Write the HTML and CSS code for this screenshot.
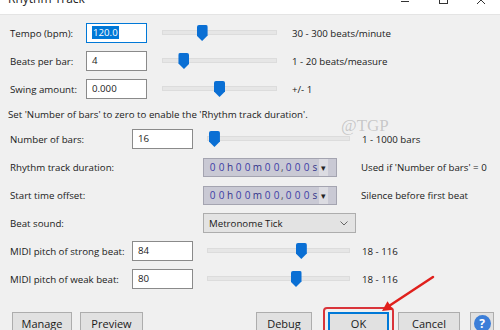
FILE: index.html
```html
<!DOCTYPE html>
<html lang="en">
<head>
<meta charset="UTF-8" />
<title>Rhythm Track</title>
<link rel="stylesheet" href="styles.css">
</head>
<body>

<div class="window">
  <div class="titlebar">
    <span class="title">Rhythm Track</span>
    <div class="winbtns">
      <span class="winbtn">
        <svg width="38" height="14" viewBox="0 0 38 14"><line x1="15" y1="1.5" x2="23" y2="1.5" stroke="#333" stroke-width="1"/></svg>
      </span>
      <span class="winbtn">
        <svg width="38" height="14" viewBox="0 0 38 14"><rect x="15.5" y="-4.5" width="8" height="8" fill="none" stroke="#333" stroke-width="1"/></svg>
      </span>
      <span class="winbtn">
        <svg width="38" height="14" viewBox="0 0 38 14"><path d="M15 -4 L23 4 M23 -4 L15 4" stroke="#333" stroke-width="1"/></svg>
      </span>
    </div>
  </div>

  <div class="content">
    <!-- tempo / beats / swing -->
    <div class="row row-a">
      <span class="lbl">Tempo (bpm):</span>
      <div class="field focused"><span class="sel">120.0</span></div>
      <div class="slider"><div class="track"></div><div class="thumb" style="left: calc(33.3% - 3.7px)"></div></div>
      <span class="range">30 - 300 beats/minute</span>
    </div>
    <div class="row row-a">
      <span class="lbl">Beats per bar:</span>
      <div class="field">4</div>
      <div class="slider"><div class="track"></div><div class="thumb" style="left: calc(15.8% - 1.7px)"></div></div>
      <span class="range">1 - 20 beats/measure</span>
    </div>
    <div class="row row-a">
      <span class="lbl">Swing amount:</span>
      <div class="field">0.000</div>
      <div class="slider"><div class="track"></div><div class="thumb" style="left: calc(50% - 5.5px)"></div></div>
      <span class="range">+/- 1</span>
    </div>

    <p class="note">Set 'Number of bars' to zero to enable the 'Rhythm track duration'.</p>

    <div class="row row-b">
      <span class="lbl">Number of bars:</span>
      <div class="field">16</div>
      <div class="slider"><div class="track"></div><div class="thumb" style="left: calc(1.5% - 0.2px)"></div></div>
      <span class="range">1 - 1000 bars</span>
    </div>
    <div class="row row-c">
      <span class="lbl">Rhythm track duration:</span>
      <div class="timectl">
        <span class="d">0</span><span class="d">0</span><span class="u">h</span><span class="d">0</span><span class="d">0</span><span class="u um">m</span><span class="d">0</span><span class="d">0</span><span class="sep">,</span><span class="d">0</span><span class="d">0</span><span class="d">0</span><span class="u">s</span><span class="drop">▾</span>
      </div>
      <span class="hint">Used if 'Number of bars' = 0</span>
    </div>
    <div class="row row-c">
      <span class="lbl">Start time offset:</span>
      <div class="timectl">
        <span class="d">0</span><span class="d">0</span><span class="u">h</span><span class="d">0</span><span class="d">0</span><span class="u um">m</span><span class="d">0</span><span class="d">0</span><span class="sep">,</span><span class="d">0</span><span class="d">0</span><span class="d">0</span><span class="u">s</span><span class="drop">▾</span>
      </div>
      <span class="hint">Silence before first beat</span>
    </div>
    <div class="row row-c">
      <span class="lbl">Beat sound:</span>
      <div class="combo">
        <span>Metronome Tick</span>
        <svg width="8" height="5" viewBox="0 0 8 5"><path d="M0.5 0.5 L4 4 L7.5 0.5" fill="none" stroke="#666" stroke-width="1"/></svg>
      </div>
    </div>
    <div class="row row-b">
      <span class="lbl">MIDI pitch of strong beat:</span>
      <div class="field">84</div>
      <div class="slider"><div class="track"></div><div class="thumb" style="left: calc(67.3% - 7.4px)"></div></div>
      <span class="range">18 - 116</span>
    </div>
    <div class="row row-b">
      <span class="lbl">MIDI pitch of weak beat:</span>
      <div class="field">80</div>
      <div class="slider"><div class="track"></div><div class="thumb" style="left: calc(63.3% - 7px)"></div></div>
      <span class="range">18 - 116</span>
    </div>
  </div>

  <div class="buttons">
    <button type="button" class="btn btn-manage">Manage</button>
    <button type="button" class="btn btn-preview">Preview</button>
    <span class="spacer"></span>
    <button type="button" class="btn btn-debug">Debug</button>
    <span class="mark"><button type="button" class="btn btn-ok">OK</button></span>
    <button type="button" class="btn btn-cancel">Cancel</button>
    <button type="button" class="btn btn-help"><span class="help-dot">?</span></button>
  </div>

  <div class="watermark">@TGP</div>

  <svg class="arrow" width="500" height="330" viewBox="0 0 500 330">
    <line x1="433" y1="277" x2="389" y2="306" stroke="#e0201c" stroke-width="2.5" stroke-linecap="round"/>
    <polygon points="382,311 387.5,301.3 393.1,309.7" fill="#e0201c"/>
  </svg>
</div>

</body>
</html>
```

FILE: styles.css
```css
html, body {
  margin: 0;
  padding: 0;
}

body {
  width: 500px;
  height: 330px;
  overflow: hidden;
  background-color: #f0f0f0;
  font-family: "Open Sans", "Noto Sans", sans-serif;
  font-size: 9.7px;
  color: #1a1a1a;
}

.window {
  position: relative;
  width: 500px;
  height: 330px;
  overflow: hidden;
}

/* title bar, mostly cut off at the top */
.titlebar {
  display: flex;
  justify-content: space-between;
  height: 14px;
  background-color: #ffffff;
  border-bottom: 1px solid #e4e4e4;
  overflow: hidden;
}

.title {
  margin: -8px 0 0 8px;
  font-size: 12px;
  line-height: 14px;
  color: #222;
}

.winbtns {
  display: flex;
}

.winbtn {
  width: 38px;
  height: 14px;
}

.content {
  padding: 4px 0 0 10px;
}

.row {
  display: flex;
  align-items: center;
  height: 28px;
}

.lbl {
  flex: none;
}

.row-a .lbl { width: 76px; }
.row-b .lbl { width: 122px; }
.row-c .lbl { width: 193px; }

.field {
  flex: none;
  box-sizing: border-box;
  width: 61px;
  height: 20px;
  padding: 0 5px;
  line-height: 18px;
  background-color: #fff;
  border: 1px solid #8a8a8a;
}

.field.focused {
  border-color: #0078d7;
}

.sel {
  display: inline-block;
  line-height: 13px;
  padding: 0 1px;
  background-color: #0078d7;
  color: #fff;
}

.slider {
  position: relative;
  flex: none;
  height: 20px;
}

.row-a .slider {
  width: 115px;
  margin: 0 15px;
}

.row-b .slider {
  width: 143px;
  margin: 0 12px 0 14px;
}

.track {
  position: absolute;
  left: 0;
  right: 0;
  top: 7px;
  height: 3px;
  background-color: #e6e6e6;
  border: 1px solid #dcdcdc;
}

.thumb {
  position: absolute;
  top: 2px;
  width: 11px;
  height: 16px;
  background-color: #0a6fd4;
  clip-path: polygon(0 0, 100% 0, 100% 65%, 50% 100%, 0 65%);
  border-radius: 2px 2px 0 0;
}

.note {
  margin: 0;
  height: 22px;
  line-height: 24px;
  margin-left: -2px;
}

.timectl {
  flex: none;
  display: flex;
  align-items: center;
  box-sizing: border-box;
  width: 134px;
  height: 19px;
  padding-left: 4px;
  background-color: #c9c9d4;
  border: 1px solid #a4a4b0;
  font-size: 10px;
  color: #3c3ca6;
}

.timectl .d {
  width: 9px;
  text-align: center;
}

.timectl .u {
  width: 8px;
  text-align: center;
  color: #33338a;
}

.timectl .um {
  width: 11px;
}

.timectl .sep {
  width: 3px;
  color: #555;
}

.timectl .drop {
  width: 9px;
  height: 17px;
  line-height: 17px;
  text-align: center;
  font-size: 9px;
  color: #222;
  background-color: #dcdce2;
}

.hint {
  margin-left: 24px;
}

.combo {
  flex: none;
  display: flex;
  align-items: center;
  justify-content: space-between;
  box-sizing: border-box;
  width: 153px;
  height: 20px;
  padding: 0 7px 0 5px;
  background-color: #e3e3e3;
  border: 1px solid #adadad;
}

/* bottom button bar */
.buttons {
  display: flex;
  align-items: flex-start;
  margin-top: 14px;
  padding: 0 6px 0 12px;
}

.spacer {
  flex: 1;
}

.btn {
  box-sizing: border-box;
  height: 23px;
  margin-top: 5px;
  padding: 0;
  font-family: inherit;
  font-size: 11px;
  color: #1a1a1a;
  background-color: #e1e1e1;
  border: 1px solid #adadad;
}

.btn-manage { width: 60px; }
.btn-preview { width: 63px; margin-left: 8px; }
.btn-debug { width: 56px; }
.btn-cancel { width: 62px; margin-left: 4px; }

.mark {
  display: flex;
  margin-left: 11px;
  padding: 3px;
  border: 2px solid #d9343a;
  border-radius: 4px;
}

.btn-ok {
  width: 61px;
  margin-top: 0;
  border: 2px solid #0078d7;
}

.btn-help {
  width: 24px;
  margin-left: 10px;
  display: flex;
  justify-content: center;
  padding-top: 2px;
}

.help-dot {
  width: 17px;
  height: 17px;
  border-radius: 50%;
  background-color: #3b7ed8;
  color: #fff;
  font-weight: bold;
  font-size: 12px;
  line-height: 17px;
  text-align: center;
}

.watermark {
  position: absolute;
  left: 341px;
  top: 116px;
  font-family: "Liberation Serif", serif;
  font-size: 17px;
  color: rgba(150, 150, 150, 0.45);
}

.arrow {
  position: absolute;
  left: 0;
  top: 0;
  pointer-events: none;
}
```
